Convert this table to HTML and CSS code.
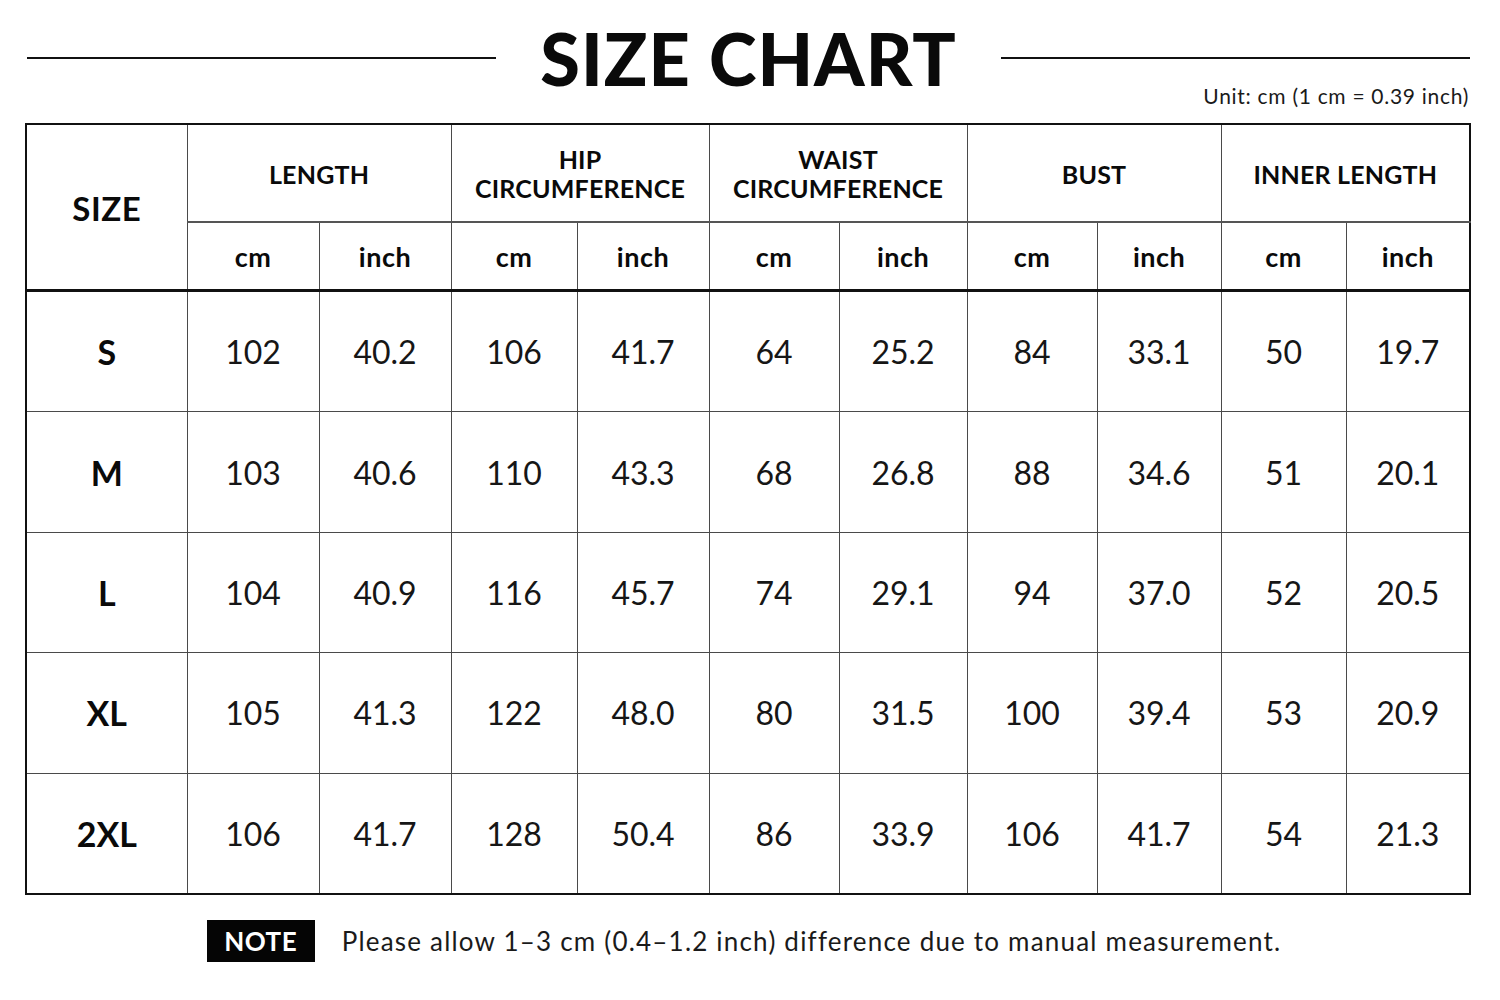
FILE: index.html
```html
<!DOCTYPE html>
<html lang="en">
<head>
<meta charset="utf-8">
<title>Size Chart</title>
<link rel="stylesheet" href="styles.css">
</head>
<body>
<div class="page">
  <div class="top">
    <div class="title-row">
      <div class="rule"></div>
      <h1 class="title">SIZE CHART</h1>
      <div class="rule"></div>
    </div>
    <div class="unit">Unit: cm (1 cm = 0.39 inch)</div>
  </div>

  <table class="chart">
    <colgroup>
      <col style="width:161px"><col style="width:132px"><col style="width:132px"><col style="width:126px"><col style="width:132px"><col style="width:130px"><col style="width:128px"><col style="width:130px"><col style="width:124px"><col style="width:125px"><col style="width:124px">
    </colgroup>
    <thead>
      <tr class="h1">
        <th rowspan="2" class="size-head">SIZE</th>
        <th colspan="2">LENGTH</th>
        <th colspan="2">HIP<br>CIRCUMFERENCE</th>
        <th colspan="2">WAIST<br>CIRCUMFERENCE</th>
        <th colspan="2">BUST</th>
        <th colspan="2">INNER LENGTH</th>
      </tr>
      <tr class="h2">
        <th>cm</th><th>inch</th><th>cm</th><th>inch</th><th>cm</th><th>inch</th><th>cm</th><th>inch</th><th>cm</th><th>inch</th>
      </tr>
    </thead>
    <tbody>
      <tr><th>S</th><td>102</td><td>40.2</td><td>106</td><td>41.7</td><td>64</td><td>25.2</td><td>84</td><td>33.1</td><td>50</td><td>19.7</td></tr>
      <tr><th>M</th><td>103</td><td>40.6</td><td>110</td><td>43.3</td><td>68</td><td>26.8</td><td>88</td><td>34.6</td><td>51</td><td>20.1</td></tr>
      <tr><th>L</th><td>104</td><td>40.9</td><td>116</td><td>45.7</td><td>74</td><td>29.1</td><td>94</td><td>37.0</td><td>52</td><td>20.5</td></tr>
      <tr><th>XL</th><td>105</td><td>41.3</td><td>122</td><td>48.0</td><td>80</td><td>31.5</td><td>100</td><td>39.4</td><td>53</td><td>20.9</td></tr>
      <tr><th>2XL</th><td>106</td><td>41.7</td><td>128</td><td>50.4</td><td>86</td><td>33.9</td><td>106</td><td>41.7</td><td>54</td><td>21.3</td></tr>
    </tbody>
  </table>

  <div class="note">
    <span class="note-tag">NOTE</span>
    <span class="note-text">Please allow 1–3 cm (0.4–1.2 inch) difference due to manual measurement.</span>
  </div>
</div>
</body>
</html>
```

FILE: styles.css
```css
html, body {
  margin: 0;
  padding: 0;
  background: #ffffff;
}

body {
  font-family: "Lato", "Open Sans", "Liberation Sans", sans-serif;
  color: #111111;
}

.page {
  width: 1500px;
  height: 1000px;
  box-sizing: border-box;
}

.top {
  padding: 16px 30px 0 27px;
}

.title-row {
  display: flex;
  align-items: center;
  gap: 44px;
  height: 84px;
}

.rule {
  flex: 1;
  height: 2px;
  background: #111111;
}

.title {
  margin: 0;
  font-size: 72px;
  font-weight: 900;
  line-height: 84px;
  letter-spacing: 1px;
  color: #0a0a0a;
}

.unit {
  text-align: right;
  font-size: 21px;
  line-height: 22px;
  letter-spacing: 0.7px;
  margin-top: -15px;
  margin-right: 1px;
  color: #1a1a1a;
}

.chart {
  margin: 16px 0 0 25px;
  width: 1444px;
  border-collapse: collapse;
  table-layout: fixed;
  border: 2px solid #111111;
}

.chart th,
.chart td {
  border: 1px solid #4a4a4a;
  text-align: center;
  vertical-align: middle;
  padding: 0;
}

.chart thead th {
  font-weight: 700;
  font-size: 25px;
  line-height: 29px;
  letter-spacing: 0.2px;
  color: #0a0a0a;
}

.chart .h1 th {
  height: 94px;
  padding-top: 2px;
}

.chart .h1 th:not(.size-head) {
  border-bottom: 2px solid #555555;
}

.chart .size-head {
  font-size: 33px;
  letter-spacing: 0.5px;
  border-bottom: 3px solid #111111;
}

.chart .h2 th {
  height: 66px;
  font-size: 27px;
  letter-spacing: 0.5px;
  border-bottom: 3px solid #111111;
}

.chart tbody th,
.chart tbody td {
  height: 119.4px;
  font-size: 32px;
}

.chart tbody th {
  font-weight: 700;
  font-size: 34px;
  color: #0a0a0a;
}

.chart tbody td {
  font-weight: 400;
  color: #161616;
}

.note {
  display: flex;
  align-items: center;
  justify-content: center;
  gap: 27px;
  margin-top: 25px;
  padding-right: 12px;
}

.note-tag {
  display: inline-flex;
  align-items: center;
  justify-content: center;
  width: 108px;
  height: 42px;
  background: #050505;
  color: #ffffff;
  font-weight: 700;
  font-size: 26px;
  letter-spacing: 0.5px;
}

.note-text {
  font-size: 26px;
  letter-spacing: 1.2px;
  color: #1a1a1a;
}
```
